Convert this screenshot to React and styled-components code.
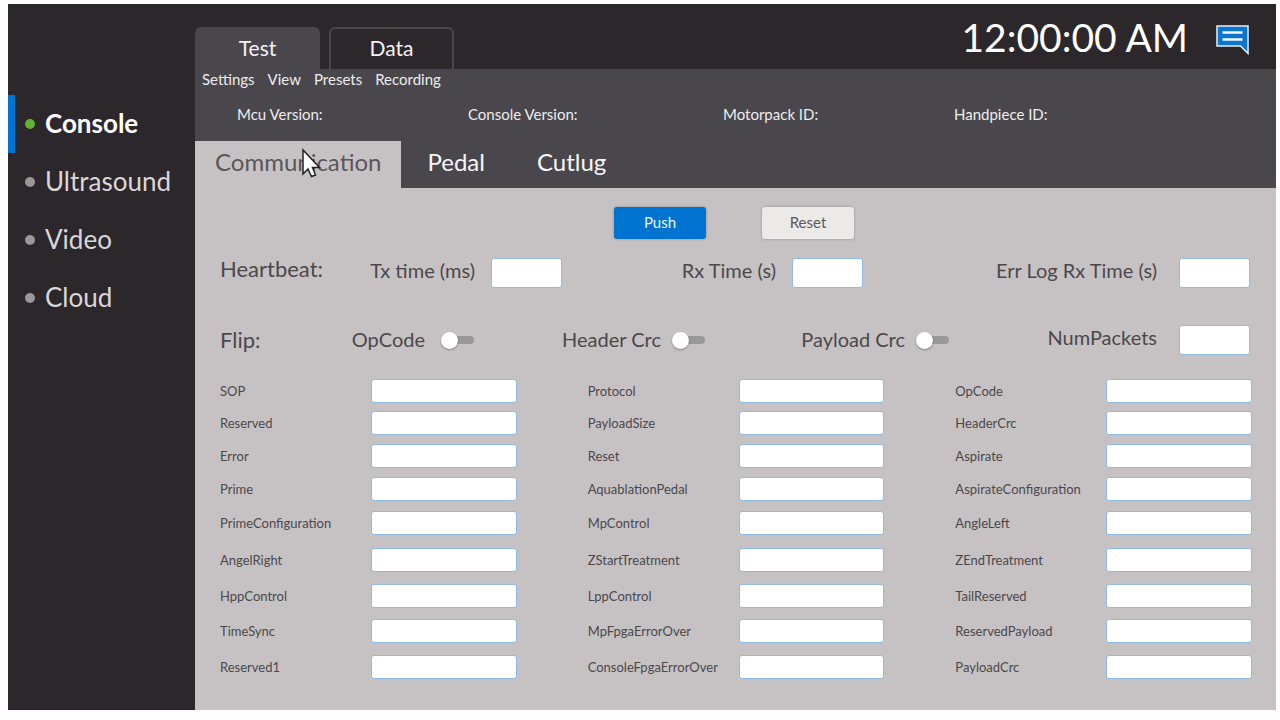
import React from "react";
import styled, { createGlobalStyle } from "styled-components";

const GlobalStyle = createGlobalStyle`
  *, *::before, *::after { box-sizing: border-box; }
  body { margin: 0; background: #fefdff; font-family: Lato, "Open Sans", sans-serif; }
  button, input { font-family: inherit; margin: 0; }
`;

const Frame = styled.div`
  min-height: 100vh;
  padding: 4px 4px 10px 8px;
  display: flex;
`;

const Sidebar = styled.nav`
  flex: 0 0 187px;
  padding-top: 91px;
  background: #2b272b;
`;

const NavItem = styled.a`
  display: flex;
  align-items: center;
  gap: 10px;
  height: 58px;
  padding-left: 10px;
  border-left: 7px solid ${(p) => (p.$active ? "#0173d0" : "transparent")};
  color: ${(p) => (p.$active ? "#ffffff" : "#d9d7d9")};
  font-size: 26px;
  line-height: 30px;
  font-weight: ${(p) => (p.$active ? 700 : 400)};
  text-decoration: none;
`;

const NavText = styled.span`
  padding-bottom: 3px;
`;

const Dot = styled.span`
  width: 10px;
  height: 10px;
  border-radius: 50%;
  background: ${(p) => (p.$active ? "#62b132" : "#99979a")};
`;

const Main = styled.main`
  flex: 1;
  min-width: 0;
  display: flex;
  flex-direction: column;
  background: #c6c2c3;
`;

const TopBar = styled.header`
  display: flex;
  align-items: flex-end;
  height: 65px;
  background: #2b272b;
`;

const TopTab = styled.button`
  width: 125px;
  height: 42px;
  margin-right: 9px;
  padding: 0 0 3px;
  border: 2px solid #49474b;
  border-bottom-width: 0;
  border-radius: 6px 6px 0 0;
  background: ${(p) => (p.$active ? "#49474b" : "transparent")};
  color: #f4f2f4;
  font-size: 21px;
  line-height: 24px;
`;

const Clock = styled.time`
  margin-left: auto;
  align-self: center;
  color: #ffffff;
  font-size: 39px;
  line-height: 48px;
`;

const ChatButton = styled.button`
  align-self: center;
  display: flex;
  margin: 6px 27px 0 28px;
  padding: 0;
  border: 0;
  background: none;
`;

const Band = styled.div`
  background: #49474b;
  color: #eeecee;
  font-size: 15px;
  line-height: 20px;
`;

const Menu = styled.div`
  display: flex;
  gap: 13px;
  padding-left: 7px;
`;

const MenuButton = styled.button`
  padding: 0;
  border: 0;
  background: none;
  color: inherit;
  font-size: 15px;
  line-height: 20px;
`;

const Versions = styled.div`
  display: grid;
  grid-template-columns: 231fr 255fr 231fr 322fr;
  padding: 15px 0 17px 42px;
`;

const SubTabs = styled.div`
  display: flex;
  height: 47px;
`;

const SubTab = styled.button`
  padding: 0 ${(p) => (p.$active ? 20 : 26)}px 6px;
  border: 0;
  background: ${(p) => (p.$active ? "#c6c2c3" : "transparent")};
  color: ${(p) => (p.$active ? "#5b565a" : "#f7f5f7")};
  font-size: 24px;
  line-height: 30px;
`;

const Form = styled.form`
  padding: 19px 24px 24px 25px;
  color: #4b484b;
`;

const Actions = styled.div`
  display: flex;
  justify-content: center;
  gap: 56px;
  padding-right: 4px;
`;

const ActionButton = styled.button`
  width: 92px;
  height: 32px;
  padding: 0 0 2px;
  border: 0;
  border-radius: 3px;
  background: ${(p) => (p.$primary ? "#0173d0" : "#ece9e9")};
  color: ${(p) => (p.$primary ? "#f0f7fd" : "#5b585a")};
  font-size: 15px;
  box-shadow: 0 0 3px rgba(70, 60, 70, 0.4);
`;

const SettingsRow = styled.div`
  display: grid;
  grid-template-columns: ${(p) => p.$columns};
  align-items: center;
  height: ${(p) => p.$height}px;
  padding-right: 2px;
  font-size: 20px;
  line-height: 24px;
`;

const Cell = styled.div`
  display: flex;
  align-items: center;
  justify-content: ${(p) => (p.$lead ? "space-between" : "flex-end")};
`;

const Heading = styled.span`
  font-size: 22px;
  padding-bottom: ${(p) => (p.$raised ? 8 : 0)}px;
`;

const Field = styled.label`
  display: flex;
  align-items: center;
  gap: ${(p) => p.$gap}px;
`;

const Caption = styled.span`
  padding-bottom: ${(p) => (p.$raised ? 6 : 3)}px;
`;

const TextBox = styled.input`
  height: 30px;
  width: 71px;
  padding: 0 4px;
  border: 1px solid #8fbce0;
  border-radius: 3px;
  background: #ffffff;
`;

const Switch = styled.input`
  appearance: none;
  position: relative;
  width: 33px;
  height: 17px;
  &::before {
    content: "";
    position: absolute;
    inset: 4px 0 5px 8px;
    border-radius: 4px;
    background: #999798;
  }
  &::after {
    content: "";
    position: absolute;
    inset: 0 auto 0 0;
    width: 17px;
    border-radius: 50%;
    background: #ffffff;
    box-shadow: 0 1px 2px rgba(0, 0, 0, 0.35);
  }
`;

const PacketGrid = styled.div`
  display: grid;
  grid-template-columns: repeat(3, minmax(0, 1fr));
  grid-template-rows: 32px 32px 34px 32px 36px 38px 34px 36px 36px;
  column-gap: 71px;
  padding-top: 2px;
`;

const PacketField = styled.label`
  display: flex;
  align-items: center;
  font-size: 13px;
  line-height: 16px;
`;

const PacketName = styled.span`
  flex: 0 0 151px;
`;

const PacketBox = styled(TextBox)`
  flex: 1;
  width: auto;
  min-width: 0;
  height: 24px;
`;

const Pointer = styled.svg`
  position: absolute;
  left: 301px;
  top: 148px;
  pointer-events: none;
`;

const navItems = ["Console", "Ultrasound", "Video", "Cloud"];

const packetFields = [
  "SOP", "Protocol", "OpCode",
  "Reserved", "PayloadSize", "HeaderCrc",
  "Error", "Reset", "Aspirate",
  "Prime", "AquablationPedal", "AspirateConfiguration",
  "PrimeConfiguration", "MpControl", "AngleLeft",
  "AngelRight", "ZStartTreatment", "ZEndTreatment",
  "HppControl", "LppControl", "TailReserved",
  "TimeSync", "MpFpgaErrorOver", "ReservedPayload",
  "Reserved1", "ConsoleFpgaErrorOver", "PayloadCrc",
];

function NumberField({ label, gap = 16 }) {
  return (
    <Field $gap={gap}>
      <Caption $raised>{label}</Caption>
      <TextBox type="text" />
    </Field>
  );
}

function SwitchField({ label, gap = 11 }) {
  return (
    <Field $gap={gap}>
      <Caption>{label}</Caption>
      <Switch type="checkbox" />
    </Field>
  );
}

export default function App() {
  return (
    <>
      <GlobalStyle />
      <Frame>
        <Sidebar>
          {navItems.map((name, i) => (
            <NavItem key={name} href="#" $active={i === 0}>
              <Dot $active={i === 0} />
              <NavText>{name}</NavText>
            </NavItem>
          ))}
        </Sidebar>
        <Main>
          <TopBar>
            <TopTab type="button" $active>Test</TopTab>
            <TopTab type="button">Data</TopTab>
            <Clock>12:00:00 AM</Clock>
            <ChatButton type="button" aria-label="Messages">
              <svg width="33" height="30" viewBox="0 0 33 30">
                <path d="M1 1H32V28.500L24.500 21H1Z" fill="#0a76d0" stroke="#e9f1f8" strokeWidth="1.500" />
                <path d="M6.500 7.500H26.500M6.500 14.500H26.500" stroke="#f4f9fd" strokeWidth="2.500" />
              </svg>
            </ChatButton>
          </TopBar>
          <Band>
            <Menu>
              <MenuButton type="button">Settings</MenuButton>
              <MenuButton type="button">View</MenuButton>
              <MenuButton type="button">Presets</MenuButton>
              <MenuButton type="button">Recording</MenuButton>
            </Menu>
            <Versions>
              <span>Mcu Version:</span>
              <span>Console Version:</span>
              <span>Motorpack ID:</span>
              <span>Handpiece ID:</span>
            </Versions>
            <SubTabs>
              <SubTab type="button" $active>Communication</SubTab>
              <SubTab type="button">Pedal</SubTab>
              <SubTab type="button">Cutlug</SubTab>
            </SubTabs>
          </Band>
          <Form>
            <Actions>
              <ActionButton type="button" $primary>Push</ActionButton>
              <ActionButton type="button">Reset</ActionButton>
            </Actions>
            <SettingsRow $columns="342fr 301fr 387fr" $height={68}>
              <Cell $lead>
                <Heading $raised>Heartbeat:</Heading>
                <NumberField label="Tx time (ms)" />
              </Cell>
              <Cell><NumberField label="Rx Time (s)" /></Cell>
              <Cell><NumberField label="Err Log Rx Time (s)" gap={22} /></Cell>
            </SettingsRow>
            <SettingsRow $columns="254fr 231fr 244fr 301fr" $height={66}>
              <Cell $lead>
                <Heading>Flip:</Heading>
                <SwitchField label="OpCode" gap={16} />
              </Cell>
              <Cell><SwitchField label="Header Crc" /></Cell>
              <Cell><SwitchField label="Payload Crc" /></Cell>
              <Cell><NumberField label="NumPackets" gap={22} /></Cell>
            </SettingsRow>
            <PacketGrid>
              {packetFields.map((name) => (
                <PacketField key={name}>
                  <PacketName>{name}</PacketName>
                  <PacketBox type="text" />
                </PacketField>
              ))}
            </PacketGrid>
          </Form>
        </Main>
      </Frame>
      <Pointer width="20" height="32" viewBox="0 0 20 32" aria-hidden="true">
        <path d="M2 2V26L7 21L10.500 28.500L14.500 27L11.500 19.500H18.500Z" fill="#fff" stroke="#242124" strokeWidth="1.500" />
      </Pointer>
    </>
  );
}
